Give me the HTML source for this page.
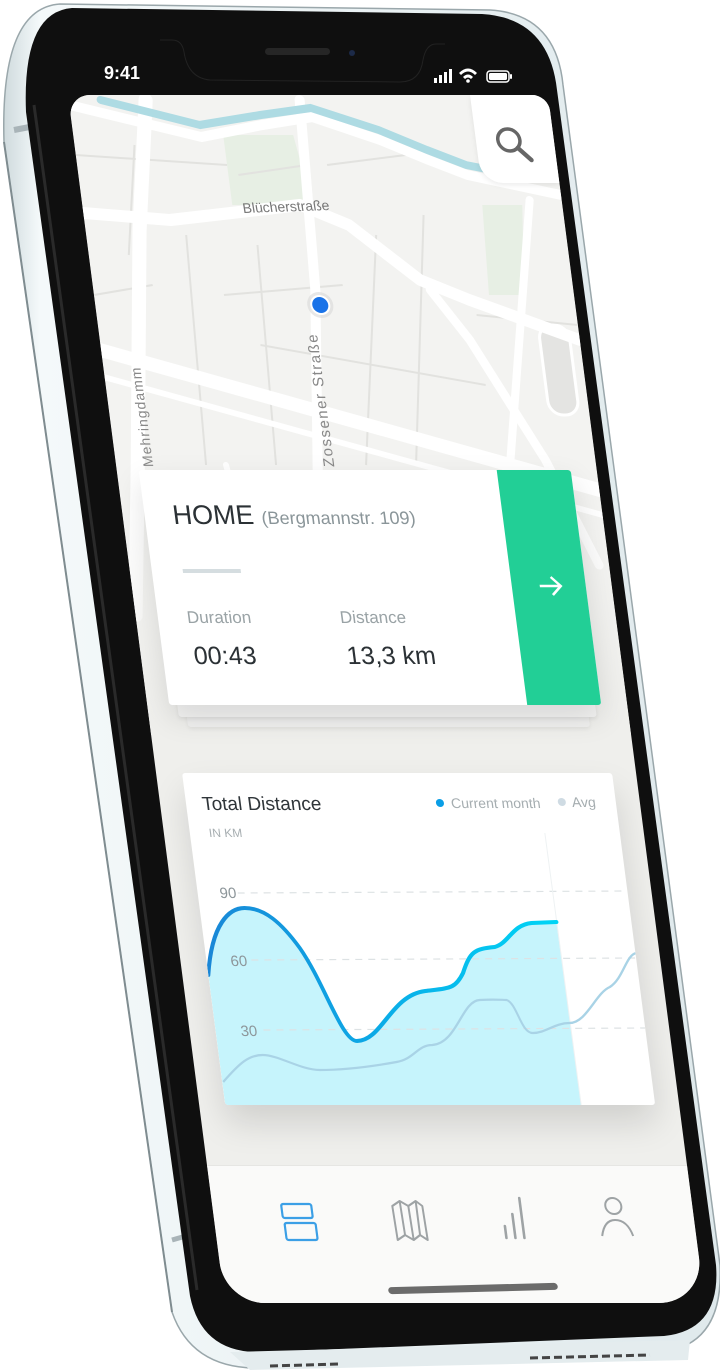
<!DOCTYPE html>
<html><head><meta charset="utf-8"><style>
html,body{margin:0;padding:0;background:#fff;}
body{width:720px;height:1372px;position:relative;overflow:hidden;font-family:"Liberation Sans",sans-serif;}
.abs{position:absolute;}
.screen{position:absolute;left:68px;top:95px;width:480px;height:1208px;transform:skewX(7.4deg);transform-origin:0 0;border-radius:22px 16px 46px 40px;overflow:hidden;background:#efefec;}
.card{position:absolute;left:22px;top:375px;width:432px;height:235px;background:#fff;border-radius:3px;box-shadow:0 12px 30px rgba(0,0,0,.12);}
.stack1{position:absolute;left:30px;top:600px;width:418px;height:22px;background:#f4f4f3;border-radius:3px;box-shadow:0 2px 4px rgba(0,0,0,.08);}
.stack2{position:absolute;left:38px;top:612px;width:402px;height:20px;background:#f0f0ef;border-radius:3px;box-shadow:0 2px 4px rgba(0,0,0,.06);}
.green{position:absolute;left:358px;top:0;width:74px;height:235px;background:#22cf96;border-radius:0 3px 3px 0;}
.chart{position:absolute;left:26px;top:678px;width:430px;height:332px;background:#fff;border-radius:3px;box-shadow:0 18px 34px rgba(0,0,0,.13);overflow:hidden;}
.tab{position:absolute;left:0;top:1070px;width:480px;height:140px;background:#fafaf9;border-top:1px solid #e6e6e3;}
</style></head><body>
<svg class="abs" style="left:0;top:0" width="720" height="1372" viewBox="0 0 720 1372">
  <defs>
    <linearGradient id="sil" x1="0" y1="0" x2="1" y2="0">
      <stop offset="0" stop-color="#cfdadd"/><stop offset=".05" stop-color="#f4f9fa"/><stop offset="1" stop-color="#dfe9ec"/>
    </linearGradient>
  </defs>
  <path d="M60,4 L490,10 Q556,14 563,85 L720,1265 Q724,1346 660,1352 L262,1368 Q192,1370 172,1312 L4,142 Q0,8 60,4 Z" fill="url(#sil)" stroke="#9aa7ab" stroke-width="1.5"/>
  <path d="M4,142 L172,1312" stroke="#7f8c90" stroke-width="2" fill="none"/>
  <path d="M14,130 L40,125" stroke="#a9b4b8" stroke-width="6"/>
  <path d="M172,1240 L200,1232" stroke="#a9b4b8" stroke-width="5"/>
  <rect x="17" y="185" width="11" height="52" rx="4" fill="#e8eef0" stroke="#8e9a9e" stroke-width="1.5" transform="skewX(7)"/>
  <rect x="0" y="280" width="14" height="100" rx="5" fill="#e8eef0" stroke="#8e9a9e" stroke-width="1.5" transform="translate(30,0) skewX(7.4)"/>
  <rect x="0" y="405" width="14" height="100" rx="5" fill="#e8eef0" stroke="#8e9a9e" stroke-width="1.5" transform="translate(42,0) skewX(7.4)"/>
  <path d="M72,8 L482,14 Q549,18 557,90 L716,1265 Q721,1330 664,1336 L265,1352 Q202,1355 190,1296 L26,112 Q22,12 72,8 Z" fill="#0f0f0f"/>
  <path d="M34,105 L197,1290" stroke="#2a2a2a" stroke-width="3" fill="none"/>
  <path d="M160,40 L172,40 Q182,40 184,52 Q188,78 210,80 L400,82 Q420,82 423,60 Q426,44 436,44 L445,44" fill="none" stroke="#222" stroke-width="1"/>
  <rect x="265" y="48" width="65" height="7" rx="3.5" fill="#262626"/>
  <circle cx="352" cy="53" r="3" fill="#1c2a48"/>
  <text x="104" y="79" fill="#fff" font-size="18" font-weight="bold" font-family="Liberation Sans">9:41</text>
  <g fill="#fff">
    <rect x="434" y="78" width="3" height="5"/><rect x="439" y="75" width="3" height="8"/><rect x="444" y="72" width="3" height="11"/><rect x="449" y="69" width="3" height="14"/>
    <path d="M459,73 Q468,64 477,73 L475,75 Q468,68 461,75 Z"/>
    <path d="M463,77 Q468,72 473,77 L471,79 Q468,76 465,79 Z"/>
    <circle cx="468" cy="81" r="1.8"/>
    <rect x="487" y="71" width="22" height="11" rx="3" fill="none" stroke="#fff" stroke-width="1.5"/>
    <rect x="489" y="73" width="18" height="7" rx="1.5"/>
    <rect x="510" y="74" width="2" height="5" rx="1"/>
  </g>
  <path d="M230,1352 L690,1340 L688,1360 L250,1370 Z" fill="#e4ecee"/>
  <g stroke="#444" stroke-width="3" stroke-dasharray="8 4">
    <path d="M270,1366 L340,1364"/><path d="M530,1358 L650,1355"/>
  </g>
</svg>

<div class="screen">
  <svg class="abs" style="left:0;top:0" width="480" height="640" viewBox="0 0 480 640">
    <defs>
      <linearGradient id="fade" x1="0" y1="0" x2="0" y2="1">
        <stop offset="0" stop-color="#efefec" stop-opacity="0"/><stop offset="1" stop-color="#efefec" stop-opacity="1"/>
      </linearGradient>
    </defs>
    <rect width="480" height="640" fill="#f3f3f1"/>
    <path d="M150,40 L220,40 L230,110 L150,110 Z" fill="#e7efe4"/>
    <path d="M400,110 L440,110 L430,200 L395,200 Z" fill="#e7efe4"/>
    <rect x="440" y="230" width="30" height="90" rx="14" fill="#e4e4e2" stroke="#fff" stroke-width="3"/>
    <g stroke="#e2e2df" stroke-width="2" fill="none">
      <path d="M0,60 L150,70 M160,80 L230,70 M40,160 L60,50 M100,140 L90,370 M130,200 L250,190 M160,250 L380,290 M290,140 L250,370 M340,120 L300,370 M250,70 L330,60 M0,200 L60,190 M170,150 L160,370 M380,220 L480,230"/>
    </g>
    <g stroke="#ffffff" fill="none" stroke-linecap="round" stroke-linejoin="round">
      <path d="M0,10 L32,18 L128,42 L190,30 L241,22 L306,45 L352,65 L389,80 L480,100" stroke-width="10"/>
      <path d="M77,5 L54,135 L21,375 L0,520" stroke-width="14"/>
      <path d="M0,118 L86,125 L218,110 L264,130 L328,185 L375,205 L480,245" stroke-width="12"/>
      <path d="M231,5 L222,195 L201,375 L190,560" stroke-width="10"/>
      <path d="M-1,255 L480,395" stroke-width="14"/>
      <path d="M-1,282 L480,420" stroke-width="6"/>
      <path d="M337,195 L370,245 L430,365 L470,470" stroke-width="9"/>
      <path d="M448,105 L393,375 L370,520" stroke-width="8"/>
      <path d="M110,370 L130,520" stroke-width="6"/>
    </g>
    <path d="M32,5 L128,30 L190,20 L241,13 L306,35 L352,55 L389,70 L453,83" stroke="#aedbe3" stroke-width="8" fill="none" stroke-linecap="round"/>
    <rect x="0" y="420" width="480" height="220" fill="url(#fade)"/>
    <text x="160" y="118" font-size="14" fill="#777" transform="rotate(-2 160 118)" font-family="Liberation Sans">Blücherstraße</text>
    <text x="0" y="0" font-size="15" letter-spacing="1.5" fill="#888" transform="translate(218,372) rotate(-90)" font-family="Liberation Sans">Zossener Straße</text>
    <text x="0" y="0" font-size="14" letter-spacing="1" fill="#888" transform="translate(37,372) rotate(-90)" font-family="Liberation Sans">Mehringdamm</text>
    <circle cx="225" cy="210" r="13" fill="#d8d8d8" opacity=".6"/>
    <circle cx="225" cy="210" r="10" fill="#fff"/>
    <circle cx="225" cy="210" r="8" fill="#1a73e8"/>
  </svg>
  <div class="abs" style="left:402px;top:0;width:78px;height:88px;background:#fff;border-radius:0 0 0 22px;box-shadow:0 2px 6px rgba(0,0,0,.08)"></div>
  <svg class="abs" style="left:418px;top:28px" width="44" height="44" viewBox="0 0 44 44">
    <circle cx="17" cy="17" r="11" fill="none" stroke="#666" stroke-width="3.5"/>
    <path d="M25,25 L37,37" stroke="#666" stroke-width="4.5" stroke-linecap="round"/>
  </svg>

  <div class="stack2"></div>
  <div class="stack1"></div>
  <div class="card">
    <div class="abs" style="left:28px;top:30px;font-size:27px;color:#2b3135;white-space:nowrap">HOME <span style="font-size:18px;color:#8a9599">(Bergmannstr. 109)</span></div>
    <div class="abs" style="left:31px;top:99px;width:58px;height:4px;background:#d5dde0"></div>
    <div class="abs" style="left:29px;top:138px;font-size:17px;color:#9aa3a6">Duration</div>
    <div class="abs" style="left:31px;top:172px;font-size:25px;color:#2b3135">00:43</div>
    <div class="abs" style="left:182px;top:138px;font-size:17px;color:#9aa3a6">Distance</div>
    <div class="abs" style="left:184px;top:172px;font-size:25px;color:#2b3135">13,3 km</div>
    <div class="green"></div>
    <svg class="abs" style="left:383px;top:102px" width="28" height="28" viewBox="0 0 28 28">
      <path d="M3,14 L24,14 M15,5 L24,14 L15,23" stroke="#fff" stroke-width="2.5" fill="none"/>
    </svg>
  </div>

  <div class="chart">
    <svg class="abs" style="left:0;top:0" width="430" height="332" viewBox="0 0 430 332">
      <defs>
        <linearGradient id="ln" x1="0" y1="0" x2="1" y2="0">
          <stop offset="0" stop-color="#1a86d6"/><stop offset=".5" stop-color="#0aaee8"/><stop offset="1" stop-color="#00d4f5"/>
        </linearGradient>
      </defs>
      <path d="M0,202 C10,150 30,135 45,135 C65,135 80,150 95,175 C115,210 125,268 140,268 C165,268 180,222 215,218 C240,215 245,216 255,200 C265,178 270,176 290,174 C305,170 310,152 330,150 L355,149 L356,332 L0,332 Z" fill="#c6f4fc"/>
      <g stroke="#dde2e4" stroke-width="1.2" stroke-dasharray="7 6">
        <path d="M40,120 L430,118"/><path d="M45,187 L430,185"/><path d="M48,257 L430,255"/>
      </g>
      <path d="M355,60 L356,332" stroke="#eef2f3" stroke-width="1"/>
      <path d="M1,309 C20,290 30,282 44,282 C60,282 80,297 99,297 C130,297 160,292 177,289 C195,286 200,272 215,272 C240,270 250,228 268,227 C285,226 290,227 295,227 C305,230 305,260 317,260 C330,260 340,250 355,250 C372,250 385,220 400,214 C415,205 420,182 431,180" stroke="#a9d3e6" stroke-width="2.2" fill="none"/>
      <path d="M0,202 C10,150 30,135 45,135 C65,135 80,150 95,175 C115,210 125,268 140,268 C165,268 180,222 215,218 C240,215 245,216 255,200 C265,178 270,176 290,174 C305,170 310,152 330,150 L355,149" stroke="url(#ln)" stroke-width="4" fill="none" stroke-linecap="round"/>
      <text x="22" y="125" font-size="15" fill="#8d969a" font-family="Liberation Sans" style="paint-order:stroke" stroke="#fff" stroke-width="4">90</text>
      <text x="24" y="193" font-size="15" fill="#8d969a" font-family="Liberation Sans">60</text>
      <text x="25" y="263" font-size="15" fill="#8d969a" font-family="Liberation Sans">30</text>
      <text x="16" y="37" font-size="19" fill="#30363a" font-family="Liberation Sans">Total Distance</text>
      <text x="19" y="64" font-size="12" fill="#a7aeb1" font-family="Liberation Sans">IN KM</text>
      <circle cx="254" cy="30" r="4" fill="#0a9ee6"/>
      <text x="265" y="35" font-size="14" fill="#a5adb0" font-family="Liberation Sans">Current month</text>
      <circle cx="376" cy="29" r="4" fill="#cfdbe3"/>
      <text x="386" y="34" font-size="14" fill="#a5adb0" font-family="Liberation Sans">Avg</text>
    </svg>
  </div>

  <div class="tab">
    <svg class="abs" style="left:0;top:0" width="480" height="130" viewBox="0 0 480 130">
      <g fill="none" stroke="#3b9fe6" stroke-width="2.2">
        <rect x="69" y="38" width="30" height="14" rx="2"/>
        <rect x="70" y="57" width="31" height="17" rx="2"/>
      </g>
      <g fill="none" stroke="#9ea3a5" stroke-width="2" stroke-linejoin="round">
        <path d="M180,40 L188,35 L196,40 L204,35 L210,40 L211,74 L204,69 L197,74 L189,69 L181,74 Z"/>
        <path d="M188,35 L189,69 M196,40 L197,74 M204,35 L204,69"/>
      </g>
      <g stroke="#9ea3a5" stroke-width="2.6" stroke-linecap="round">
        <path d="M290,60 L290,72 M299,48 L299,72 M308,32 L308,72"/>
      </g>
      <g fill="none" stroke="#9ea3a5" stroke-width="2">
        <circle cx="401" cy="40" r="8"/>
        <path d="M386,70 Q390,54 401,54 Q413,54 417,70"/>
      </g>
    </svg>
  </div>
  <div class="abs" style="left:165px;top:1190px;width:170px;height:7px;border-radius:4px;background:#6b6b6b;transform:rotate(-1.5deg)"></div>
</div>
</body></html>
